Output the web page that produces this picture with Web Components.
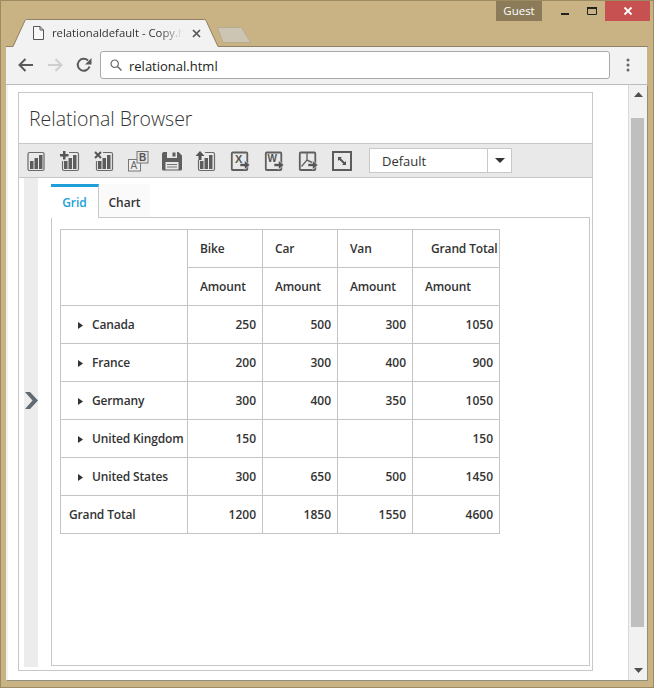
<!DOCTYPE html>
<html>
<head>
<meta charset="utf-8">
<title>Relational Browser</title>
<style>
  html, body { margin: 0; background: #fff; }
  body { font-family: "Open Sans", "Liberation Sans", sans-serif; }
</style>
</head>
<body>
<browser-window>
  <pivot-browser></pivot-browser>
</browser-window>

<script>
// toolbar glyphs, all on a 20x20 box
const CHART_BARS = `<rect x="4" y="10" width="3.500" height="8"/><rect x="8.500" y="7" width="3.500" height="11"/><rect x="13" y="4" width="3.500" height="14"/>`;
const DOC_FRAME = `<rect x="1.800" y="1.500" width="15.500" height="17.500" rx="1" fill="none" stroke="#5f5f5f" stroke-width="1.800"/>`;
const DOC_ARROW = `<path d="M10 12.500h4.500V9.500L20 14l-5.500 4.500V15.500H10z" fill="#555" stroke="#e9e9e9" stroke-width=".6"/>`;
const ICONS = {
  report: `<rect x="2" y="1.500" width="16" height="18" rx="1.500" fill="none" stroke="#6a6a6a" stroke-width="1.200"/><g fill="#5c5c5c">${CHART_BARS}</g>`,
  add: `<path d="M9 1.500h8a1.500 1.500 0 0 1 1.500 1.500v15a1.500 1.500 0 0 1-1.500 1.500H4A1.500 1.500 0 0 1 2.500 18V10" fill="none" stroke="#6a6a6a" stroke-width="1.200"/><path d="M3 0h2.500v3H8.500v2.500H5.500v3H3v-3H0V3h3z" fill="#555"/><g fill="#5c5c5c">${CHART_BARS}</g>`,
  remove: `<path d="M9 1.500h8a1.500 1.500 0 0 1 1.500 1.500v15a1.500 1.500 0 0 1-1.500 1.500H4A1.500 1.500 0 0 1 2.500 18V10" fill="none" stroke="#6a6a6a" stroke-width="1.200"/><path d="M1 1l6 6M7 1L1 7" stroke="#555" stroke-width="2" fill="none"/><g fill="#5c5c5c">${CHART_BARS}</g>`,
  rename: `<rect x=".5" y="8.500" width="12" height="11.500" fill="#efefef" stroke="#777"/><rect x="9" y="0.500" width="11" height="11.500" fill="#e4e4e4" stroke="#777"/><text x="2.500" y="18" font-size="10" font-family="Liberation Sans" fill="#666">A</text><text x="11" y="10" font-size="10" font-weight="700" font-family="Liberation Sans" fill="#555">B</text>`,
  save: `<path d="M2 1h3v6h10V1h1.500L20 4.500V18a1.500 1.500 0 0 1-1.500 1.500h-17A1.500 1.500 0 0 1 0 18V3a2 2 0 0 1 2-2z" fill="#5f5f5f"/><rect x="10.500" y="1.500" width="3" height="4" fill="#5f5f5f"/><rect x="3.500" y="11" width="13" height="7.500" fill="#e9e9e9"/><path d="M5 13.500h10M5 16h10" stroke="#777"/>`,
  load: `<path d="M9 1.500h8a1.500 1.500 0 0 1 1.500 1.500v15a1.500 1.500 0 0 1-1.500 1.500H4A1.500 1.500 0 0 1 2.500 18V9" fill="none" stroke="#6a6a6a" stroke-width="1.200"/><path d="M4 0L8.500 5H5.500v4h-3V5H-.5z" fill="#555"/><g fill="#5c5c5c">${CHART_BARS}</g>`,
  excel: `${DOC_FRAME}<text x="5" y="11.500" font-size="11" font-weight="700" font-family="Liberation Sans" fill="#555">X</text>${DOC_ARROW}`,
  word: `${DOC_FRAME}<text x="3.500" y="11" font-size="10" font-weight="700" font-family="Liberation Sans" fill="#555">W</text>${DOC_ARROW}`,
  pdf: `${DOC_FRAME}<path d="M9 2v7L3.500 15.500M9 9l5 2.500" stroke="#666" stroke-width="1.400" fill="none"/>${DOC_ARROW}`,
  fullscreen: `<rect x="1" y="1" width="18" height="18" fill="none" stroke="#5c5c5c" stroke-width="2"/><path d="M6 6h4L8.700 7.300l4 4L14 10v4h-4l1.300-1.300-4-4L6 10z" fill="#555"/>`
};

class BrowserWindow extends HTMLElement {
  constructor() {
    super();
    this.attachShadow({ mode: "open" }).innerHTML = `
      <style>
        :host {
          display: flex; flex-direction: column; box-sizing: border-box;
          width: 654px; height: 688px; padding: 0 6px 7px 5px;
          background: #c9b384; border: 1px solid #9c8a60;
        }
        .viewport {
          flex: 1; min-height: 0; display: flex; background: #fff;
          border-left: 2px solid #f2f2f2;
          box-shadow: 1px 1px 0 #8f8f80;
        }
        .page { flex: 1; min-width: 0; padding: 7px 35px 10px 10px; }
      </style>
      <window-caption></window-caption>
      <tab-strip></tab-strip>
      <nav-bar></nav-bar>
      <div class="viewport">
        <div class="page"><slot></slot></div>
        <page-scrollbar></page-scrollbar>
      </div>`;
  }
}

class WindowCaption extends HTMLElement {
  constructor() {
    super();
    this.attachShadow({ mode: "open" }).innerHTML = `
      <style>
        :host { display: flex; justify-content: flex-end; height: 20px; margin-right: -3px; }
        .guest { width: 46px; background: #8b7b59; color: #fff; font: 11.500px/20px "Open Sans", sans-serif; text-align: center; margin-right: 10px; }
        .ctl { display: flex; align-items: center; justify-content: center; }
        .min { width: 27px; }
        .max { width: 26px; }
        .close { width: 45px; background: #c75050; }
      </style>
      <div class="guest">Guest</div>
      <div class="ctl min"><svg width="9" height="8"><rect width="8" height="2" y="6" fill="#222"/></svg></div>
      <div class="ctl max"><svg width="11" height="9"><path d="M.5.500h9v7h-9z" fill="none" stroke="#222"/><path d="M0 1h10" stroke="#222" stroke-width="2"/></svg></div>
      <div class="ctl close"><svg width="10" height="10"><path d="M1.500 1.500l7 7M8.500 1.500l-7 7" stroke="#fff" stroke-width="1.800"/></svg></div>`;
  }
}

class TabStrip extends HTMLElement {
  constructor() {
    super();
    this.attachShadow({ mode: "open" }).innerHTML = `
      <style>
        :host { display: flex; height: 28px; margin-top: -2px; position: relative; align-items: flex-start; }
        svg.shape { position: absolute; left: 0; top: 0; }
        .tab { position: relative; display: flex; align-items: center; height: 28px; padding-left: 27px; width: 205px; box-sizing: border-box; }
        .title { flex: none; width: 131px; margin-left: 8px; white-space: nowrap; font: 11.300px/28px "Open Sans", sans-serif; color: #333;
          -webkit-mask-image: linear-gradient(90deg, #000 108px, transparent 131px); }
        .x { margin-left: 9px; display: block; flex: none; }
      </style>
      <svg class="shape" width="642" height="28">
        <path d="M7 28L19 1.500C19.500 .5 20 .5 21 .5H198C199 .5 199.500 1 200 1.500L212 28z" fill="#f2f2f2"/>
        <path d="M0 27.500H7L19 1.500C19.500 .5 20 .5 21 .5H198C199 .5 199.500 1 200 1.500L212 27.500H642" fill="none" stroke="#8f8163"/>
        <path d="M211.500 8.500h24l9 15h-27.500z" fill="#cdc5b3" stroke="#b9ac8f"/>
      </svg>
      <div class="tab">
        <svg width="11" height="14" viewBox="0 0 11 14"><path d="M.5.500h6.500l3.500 3.500v9.500h-10z M7 .500v3.500h3.500" fill="#f9f9f9" stroke="#555"/></svg>
        <div class="title">relationaldefault - Copy.h</div>
        <svg class="x" width="9" height="9"><path d="M1 1l7 7M8 1L1 8" stroke="#555" stroke-width="1.700"/></svg>
      </div>`;
  }
}

class NavBar extends HTMLElement {
  constructor() {
    super();
    this.attachShadow({ mode: "open" }).innerHTML = `
      <style>
        :host { display: flex; align-items: center; height: 38px; box-sizing: border-box; background: #f2f2f2; border-bottom: 1px solid #bcbcbc; padding: 0 0 1px 12px; }
        svg { display: block; flex: none; }
        .fwd { margin-left: 13px; }
        .reload { margin-left: 13px; }
        .omni { margin-left: 8px; flex: none; width: 510px; height: 28px; box-sizing: border-box; border: 1px solid #a9a9a9; border-radius: 3px; background: #fff; display: flex; align-items: center; padding-left: 9px; gap: 7px; font: 13px "Open Sans", sans-serif; color: #222; }
        .omni span { position: relative; top: 1px; }
        .menu { margin-left: 16px; }
      </style>
      <svg width="16" height="14" viewBox="0 0 16 14"><path d="M15 7H2M7.500 1L1.500 7l6 6" fill="none" stroke="#5a5a5a" stroke-width="2"/></svg>
      <svg class="fwd" width="16" height="14" viewBox="0 0 16 14"><path d="M1 7h13M8.500 1l6 6-6 6" fill="none" stroke="#cfcfcf" stroke-width="2"/></svg>
      <svg class="reload" width="16" height="16" viewBox="0 0 16 16"><path d="M13.500 9.500A6 6 0 1 1 12 3.500" fill="none" stroke="#5a5a5a" stroke-width="2"/><path d="M15.500 1v6.500H9z" fill="#5a5a5a"/></svg>
      <div class="omni">
        <svg width="12" height="12" viewBox="0 0 12 12"><circle cx="4.700" cy="4.700" r="3.700" fill="none" stroke="#666" stroke-width="1.200"/><path d="M7.500 7.500l4 4" stroke="#666" stroke-width="1.400"/></svg>
        <span>relational.html</span>
      </div>
      <svg class="menu" width="4" height="14"><circle cx="2" cy="2" r="1.500" fill="#666"/><circle cx="2" cy="7" r="1.500" fill="#666"/><circle cx="2" cy="12" r="1.500" fill="#666"/></svg>`;
  }
}

class PageScrollbar extends HTMLElement {
  constructor() {
    super();
    this.attachShadow({ mode: "open" }).innerHTML = `
      <style>
        :host { display: flex; flex-direction: column; align-items: center; flex: none; width: 19px; box-sizing: border-box; background: #f1f1f1; border-left: 1px solid #d8d8d8; padding: 7px 1px 7px 0; }
        svg { display: block; flex: none; margin-left: 2px; }
        .thumb { width: 13px; height: 509px; background: #bfbfbf; margin: 21px 0 0; }
        .down { margin-top: auto; }
      </style>
      <svg width="9" height="5"><path d="M4.500 0l4.500 5H0z" fill="#505050"/></svg>
      <div class="thumb"></div>
      <svg class="down" width="9" height="5"><path d="M0 0h9L4.500 5z" fill="#505050"/></svg>`;
  }
}

class PivotToolbar extends HTMLElement {
  constructor() {
    super();
    const buttons = Object.keys(ICONS).map(k =>
      `<svg viewBox="0 0 20 20" width="20" height="20" data-icon="${k}">${ICONS[k]}</svg>`).join("");
    this.attachShadow({ mode: "open" }).innerHTML = `
      <style>
        :host { display: flex; align-items: center; height: 35px; box-sizing: border-box; background: #e9e9e9; border-top: 1px solid #c8c8c8; border-bottom: 1px solid #c8c8c8; padding-left: 7px; }
        .icons { display: flex; gap: 14px; }
        svg { display: block; overflow: visible; }
        .combo { display: flex; margin-left: 17px; width: 143px; height: 25px; box-sizing: border-box; background: #fff; border: 1px solid #c8c8c8; font: 13px/25px "Open Sans", sans-serif; color: #333; }
        .combo span { flex: 1; padding-left: 12px; border-right: 1px solid #c8c8c8; }
        .combo i { width: 23px; display: flex; align-items: center; justify-content: center; }
      </style>
      <div class="icons">${buttons}</div>
      <div class="combo"><span>Default</span><i><svg width="10" height="5"><path d="M0 0h10L5 5z" fill="#333"/></svg></i></div>`;
  }
}

class PivotGrid extends HTMLElement {
  constructor() {
    super();
    const rows = [
      ["Canada", 250, 500, 300, 1050],
      ["France", 200, 300, 400, 900],
      ["Germany", 300, 400, 350, 1050],
      ["United Kingdom", 150, "", "", 150],
      ["United States", 300, 650, 500, 1450]
    ];
    const body = rows.map(r => `<tr>
        <th class="row"><svg width="5" height="7"><path d="M0 0l5 3.500L0 7z" fill="#333"/></svg>${r[0]}</th>
        ${r.slice(1).map(v => `<td>${v}</td>`).join("")}
      </tr>`).join("");
    this.attachShadow({ mode: "open" }).innerHTML = `
      <style>
        :host { display: block; color: #333; font: 600 12px "Open Sans", sans-serif; }
        table { border-collapse: collapse; table-layout: fixed; width: 439px; }
        th, td { height: 38px; box-sizing: border-box; padding: 0; border: 1px solid #c4c4c4; font-weight: 600; white-space: nowrap; overflow: hidden; }
        th { letter-spacing: -.15px; }
        thead th { text-align: left; padding-left: 12px; }
        thead th.gt { padding-left: 18px; }
        th.row { text-align: left; padding-left: 17px; }
        th.row svg { margin-right: 9px; }
        th.total { text-align: left; padding-left: 8px; }
        td { text-align: right; padding-right: 6px; }
      </style>
      <table>
        <colgroup><col style="width:127px"><col style="width:75px"><col style="width:75px"><col style="width:75px"><col style="width:87px"></colgroup>
        <thead>
          <tr><th rowspan="2"></th><th>Bike</th><th>Car</th><th>Van</th><th class="gt">Grand Total</th></tr>
          <tr><th>Amount</th><th>Amount</th><th>Amount</th><th>Amount</th></tr>
        </thead>
        <tbody>
          ${body}
          <tr><th class="total">Grand Total</th><td>1200</td><td>1850</td><td>1550</td><td>4600</td></tr>
        </tbody>
      </table>`;
  }
}

class PivotTabs extends HTMLElement {
  constructor() {
    super();
    this.attachShadow({ mode: "open" }).innerHTML = `
      <style>
        :host { display: flex; flex-direction: column; flex: 1; min-width: 0; font: 600 12px "Open Sans", sans-serif; }
        .heads { display: flex; height: 34px; margin-bottom: -1px; position: relative; }
        .tab { box-sizing: border-box; height: 34px; line-height: 31px; text-align: center; }
        .grid { width: 48px; color: #1e9fd9; background: #fff; border-top: 3px solid #1e9fd9; border-right: 1px solid #c8c8c8; }
        .chart { width: 51px; color: #333; background: #fafafa; height: 33px; padding-top: 3px; }
        .content { flex: 1; border: 1px solid #c8c8c8; padding: 11px 8px; }
      </style>
      <div class="heads"><div class="tab grid">Grid</div><div class="tab chart">Chart</div></div>
      <div class="content"><slot></slot></div>`;
  }
}

class PivotBrowser extends HTMLElement {
  constructor() {
    super();
    this.attachShadow({ mode: "open" }).innerHTML = `
      <style>
        :host { display: flex; flex-direction: column; box-sizing: border-box; height: 579px; border: 1px solid #c8c8c8; }
        h1 { margin: 0; height: 50px; box-sizing: border-box; padding: 1px 0 0 10px; font: 300 19.500px/50px "Open Sans", sans-serif; color: #333; }
        .body { flex: 1; min-height: 0; display: flex; padding: 0 2px 4px 5px; }
        .strip { flex: none; width: 14px; margin-bottom: -1px; box-sizing: border-box; padding: 214px 0 0 1px; background: #ececec; }
        .strip svg { display: block; }
        .main { flex: 1; min-width: 0; display: flex; margin-left: 13px; padding-top: 6px; }
      </style>
      <h1>Relational Browser</h1>
      <pivot-toolbar></pivot-toolbar>
      <div class="body">
        <div class="strip"><svg width="13" height="17" viewBox="0 0 13 17"><path d="M0 0h5l8 8.500L5 17H0l7.500-8.500z" fill="#616a70"/></svg></div>
        <div class="main"><pivot-tabs><pivot-grid></pivot-grid></pivot-tabs></div>
      </div>`;
  }
}

customElements.define("browser-window", BrowserWindow);
customElements.define("window-caption", WindowCaption);
customElements.define("tab-strip", TabStrip);
customElements.define("nav-bar", NavBar);
customElements.define("page-scrollbar", PageScrollbar);
customElements.define("pivot-toolbar", PivotToolbar);
customElements.define("pivot-grid", PivotGrid);
customElements.define("pivot-tabs", PivotTabs);
customElements.define("pivot-browser", PivotBrowser);
</script>
</body>
</html>
